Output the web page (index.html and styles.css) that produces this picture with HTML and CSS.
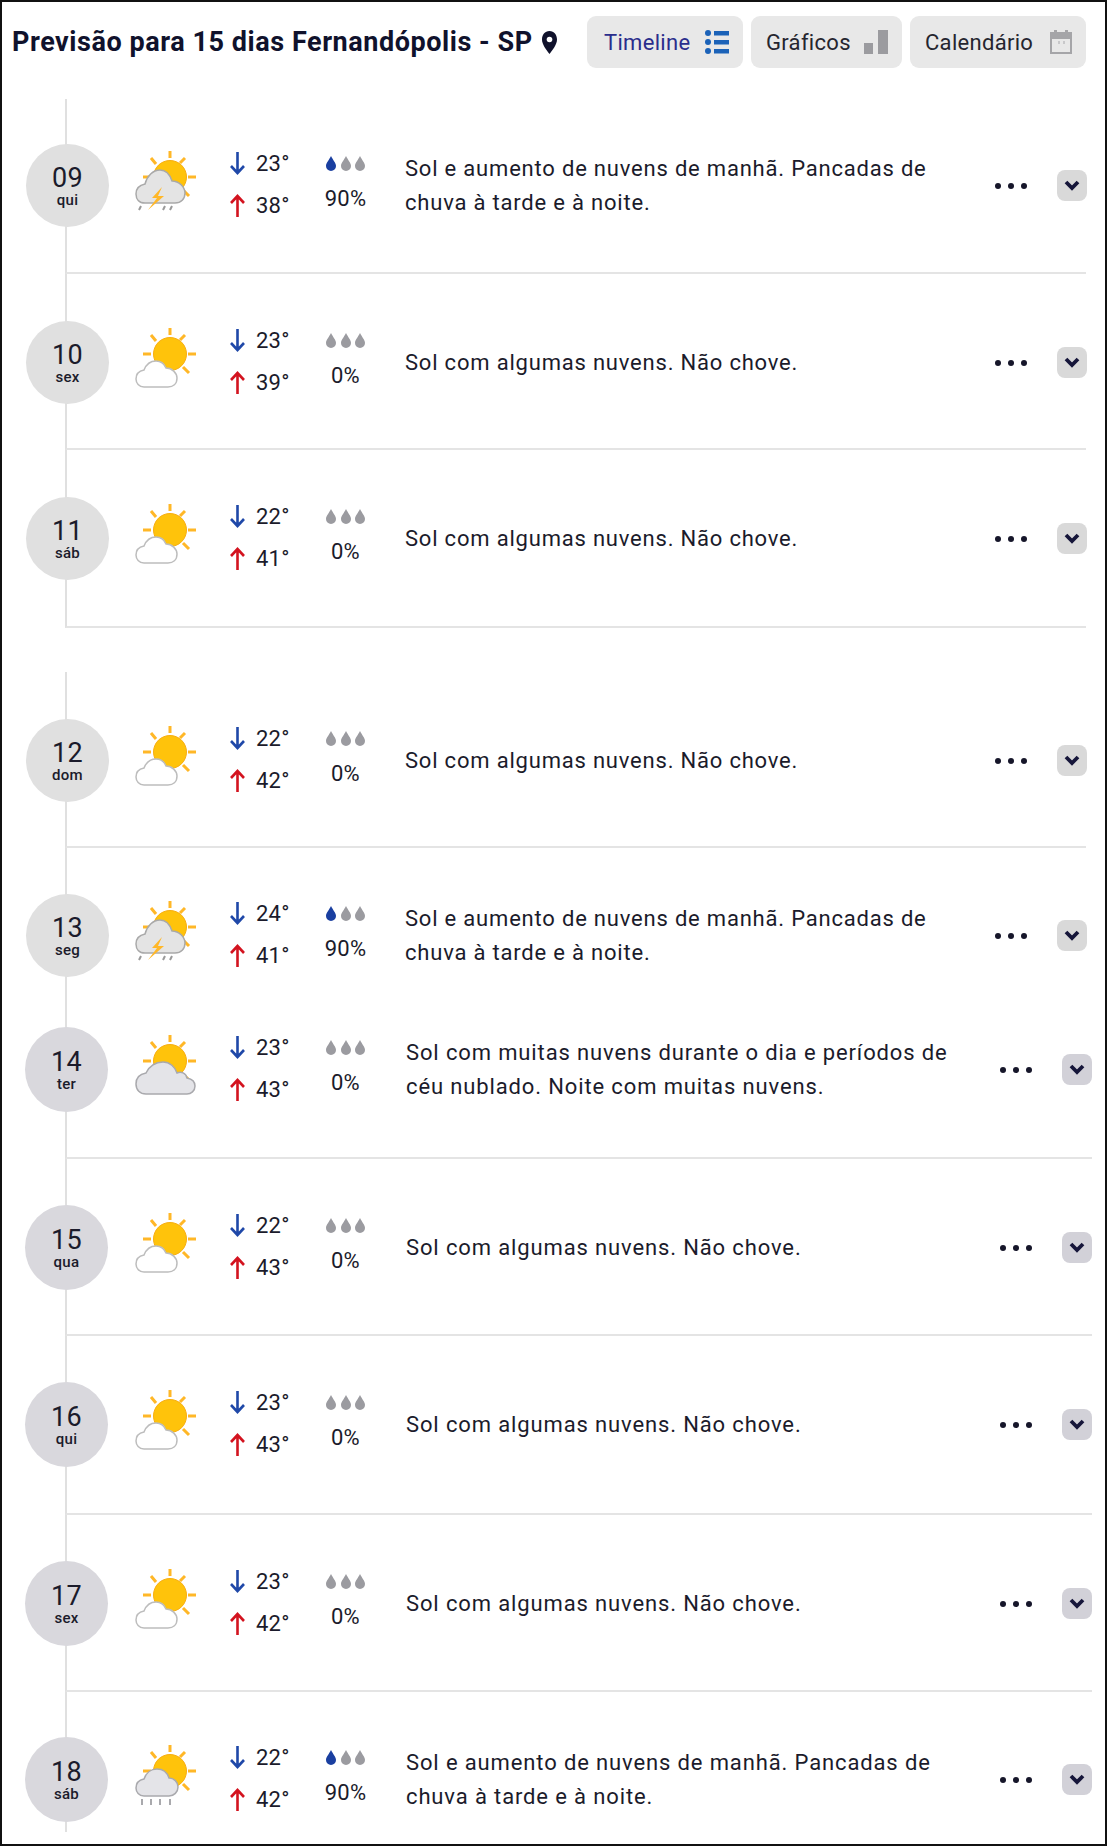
FILE: index.html
```html
<!DOCTYPE html>
<html lang="pt-BR">
<head>
  <meta charset="UTF-8">
  <meta name="viewport" content="width=device-width, initial-scale=1.0">
  <title>Previsão para 15 dias</title>
  <link rel="stylesheet" href="styles.css">
</head>
<body>

  <!-- Weather icons -->
  <svg class="defs" width="0" height="0">
    <symbol id="sun" viewBox="0 0 61 60">
      <circle cx="35" cy="26" r="16.500" fill="#ffc30b" stroke="#f7ae12" stroke-width="1"/>
      <g stroke="#ffb727" stroke-width="3">
        <path d="M35 0V7M50 7L45 12M61 26H53M54 45L48 39M8 26H16M16 7L21 13"/>
      </g>
    </symbol>
    <symbol id="sun-cloud" viewBox="0 0 61 60">
      <use href="#sun"/>
      <path d="M9 59C4 59 1 55 1 51C1 46 4 43 9 42C11 37 15 33 21 33C26 33 29 35 31 40C37 40 42 45 42 50C42 56 38 59 33 59Z" fill="#fff" stroke="#bdbdbd" stroke-width="1.5"/>
    </symbol>
    <symbol id="sun-cloudy" viewBox="0 0 61 60">
      <use href="#sun"/>
      <path d="M11 59C5 59 1 55 1 49C1 43 5 39 11 38C14 32 20 27 28 27C35 27 40 32 42 38C46 36 51 38 52 43C57 44 60 47 60 51C60 56 56 59 52 59Z" fill="#e4e4e8" stroke="#a9a9ad" stroke-width="1.5"/>
    </symbol>
    <symbol id="sun-storm" viewBox="0 0 61 60">
      <use href="#sun"/>
      <path d="M10 52C4 52 1 48 1 43C1 37 5 34 10 33C12 25 18 19 25 19C31 19 35 24 37 30C44 30 50 36 50 42C50 48 46 52 40 52Z" fill="#e4e4e4" stroke="#a9a9a9" stroke-width="1.5"/>
      <path d="M27 36L17 47H22L13 59L29 45H23Z" fill="#ffb727"/>
      <path d="M6 55L4 59M30 55L28 59M37 55L35 59" stroke="#9a9a9a" stroke-width="2"/>
    </symbol>
    <symbol id="sun-rain" viewBox="0 0 61 60">
      <use href="#sun"/>
      <path d="M9 51C4 51 1 47 1 43C1 38 4 35 9 34C11 28 16 24 22 24C28 24 32 27 34 33C39 33 43 37 43 42C43 47 39 51 34 51Z" fill="#e4e4e8" stroke="#a9a9ad" stroke-width="1.5"/>
      <path d="M7 54V60M16 54V60M25 54V60M35 54V60" stroke="#a9a9ad" stroke-width="2"/>
    </symbol>
    <symbol id="drop" viewBox="0 0 12 15">
      <path d="M6 0C8 4 11 7 11 10A5 5 0 0 1 1 10C1 7 4 4 6 0Z"/>
    </symbol>
    <symbol id="arrow-down" viewBox="0 0 15 23">
      <path d="M7.5 0V21M1 14L7.5 21L14 14" fill="none" stroke="#1f48a8" stroke-width="2.6"/>
    </symbol>
    <symbol id="arrow-up" viewBox="0 0 15 23">
      <path d="M7.5 23V2M1 9L7.5 2L14 9" fill="none" stroke="#d3131f" stroke-width="2.6"/>
    </symbol>
    <symbol id="chevron" viewBox="0 0 16 11">
      <path d="M2 2L8 8L14 2" fill="none" stroke="#16163a" stroke-width="3.8"/>
    </symbol>
  </svg>

  <div class="page">

    <div class="header">
      <h1 class="title">Previsão para 15 dias Fernandópolis - SP
        <svg class="pin" viewBox="0 0 17 23"><path d="M8.500 0C3.800 0 1 3.800 1 8.500C1 13.500 5.500 19 8.500 23C11.500 19 16 13.500 16 8.500C16 3.800 13.200 0 8.500 0Z" fill="#10122c"/><circle cx="8.500" cy="8.500" r="2.800" fill="#fff"/></svg>
      </h1>
      <div class="tabs">
        <div class="tab tab-active">Timeline
          <svg class="tab-icon" viewBox="0 0 24 24" fill="#1b62b8"><circle cx="3" cy="3" r="3"/><circle cx="3" cy="12" r="3"/><circle cx="3" cy="21" r="3"/><rect x="9" y="1" width="15" height="4.500"/><rect x="9" y="10" width="15" height="4.500"/><rect x="9" y="19" width="15" height="4.500"/></svg>
        </div>
        <div class="tab">Gráficos
          <svg class="tab-icon" viewBox="0 0 24 24" fill="#9b9b9f"><rect x="0" y="13" width="9" height="11"/><rect x="14" y="0" width="10" height="24"/></svg>
        </div>
        <div class="tab">Calendário
          <svg class="tab-icon tab-icon-cal" viewBox="0 0 22 24"><rect x="1" y="3" width="20" height="20" fill="#e8e8e8" stroke="#a5a5a8" stroke-width="2"/><rect x="1" y="3" width="20" height="6" fill="#a5a5a8"/><rect x="4" y="0" width="3" height="4" fill="#a5a5a8"/><rect x="15" y="0" width="3" height="4" fill="#a5a5a8"/><rect x="8" y="11" width="2" height="3" fill="#c8c8ca"/><rect x="13" y="11" width="2" height="3" fill="#c8c8ca"/></svg>
        </div>
      </div>
    </div>

    <div class="group">
      <div class="day day-09">
        <div class="date"><span class="num">09</span><span class="weekday">qui</span></div>
        <svg class="wx"><use href="#sun-storm"/></svg>
        <div class="temps">
          <div class="temp"><svg class="arrow"><use href="#arrow-down"/></svg>23°</div>
          <div class="temp"><svg class="arrow"><use href="#arrow-up"/></svg>38°</div>
        </div>
        <div class="rain">
          <div class="drops"><svg class="drop on"><use href="#drop"/></svg><svg class="drop"><use href="#drop"/></svg><svg class="drop"><use href="#drop"/></svg></div>
          <span>90%</span>
        </div>
        <p class="desc">Sol e aumento de nuvens de manhã. Pancadas de chuva à tarde e à noite.</p>
        <div class="dots"><i></i><i></i><i></i></div>
        <div class="more"><svg class="chev"><use href="#chevron"/></svg></div>
      </div>

      <div class="day day-10">
        <div class="date"><span class="num">10</span><span class="weekday">sex</span></div>
        <svg class="wx"><use href="#sun-cloud"/></svg>
        <div class="temps">
          <div class="temp"><svg class="arrow"><use href="#arrow-down"/></svg>23°</div>
          <div class="temp"><svg class="arrow"><use href="#arrow-up"/></svg>39°</div>
        </div>
        <div class="rain">
          <div class="drops"><svg class="drop"><use href="#drop"/></svg><svg class="drop"><use href="#drop"/></svg><svg class="drop"><use href="#drop"/></svg></div>
          <span>0%</span>
        </div>
        <p class="desc">Sol com algumas nuvens. Não chove.</p>
        <div class="dots"><i></i><i></i><i></i></div>
        <div class="more"><svg class="chev"><use href="#chevron"/></svg></div>
      </div>

      <div class="day day-11">
        <div class="date"><span class="num">11</span><span class="weekday">sáb</span></div>
        <svg class="wx"><use href="#sun-cloud"/></svg>
        <div class="temps">
          <div class="temp"><svg class="arrow"><use href="#arrow-down"/></svg>22°</div>
          <div class="temp"><svg class="arrow"><use href="#arrow-up"/></svg>41°</div>
        </div>
        <div class="rain">
          <div class="drops"><svg class="drop"><use href="#drop"/></svg><svg class="drop"><use href="#drop"/></svg><svg class="drop"><use href="#drop"/></svg></div>
          <span>0%</span>
        </div>
        <p class="desc">Sol com algumas nuvens. Não chove.</p>
        <div class="dots"><i></i><i></i><i></i></div>
        <div class="more"><svg class="chev"><use href="#chevron"/></svg></div>
      </div>
    </div>

    <div class="group group-gap">
      <div class="day day-12">
        <div class="date"><span class="num">12</span><span class="weekday">dom</span></div>
        <svg class="wx"><use href="#sun-cloud"/></svg>
        <div class="temps">
          <div class="temp"><svg class="arrow"><use href="#arrow-down"/></svg>22°</div>
          <div class="temp"><svg class="arrow"><use href="#arrow-up"/></svg>42°</div>
        </div>
        <div class="rain">
          <div class="drops"><svg class="drop"><use href="#drop"/></svg><svg class="drop"><use href="#drop"/></svg><svg class="drop"><use href="#drop"/></svg></div>
          <span>0%</span>
        </div>
        <p class="desc">Sol com algumas nuvens. Não chove.</p>
        <div class="dots"><i></i><i></i><i></i></div>
        <div class="more"><svg class="chev"><use href="#chevron"/></svg></div>
      </div>

      <div class="day day-13">
        <div class="date"><span class="num">13</span><span class="weekday">seg</span></div>
        <svg class="wx"><use href="#sun-storm"/></svg>
        <div class="temps">
          <div class="temp"><svg class="arrow"><use href="#arrow-down"/></svg>24°</div>
          <div class="temp"><svg class="arrow"><use href="#arrow-up"/></svg>41°</div>
        </div>
        <div class="rain">
          <div class="drops"><svg class="drop on"><use href="#drop"/></svg><svg class="drop"><use href="#drop"/></svg><svg class="drop"><use href="#drop"/></svg></div>
          <span>90%</span>
        </div>
        <p class="desc">Sol e aumento de nuvens de manhã. Pancadas de chuva à tarde e à noite.</p>
        <div class="dots"><i></i><i></i><i></i></div>
        <div class="more"><svg class="chev"><use href="#chevron"/></svg></div>
      </div>
    </div>

    <div class="group group-wide">
      <div class="day day-14">
        <div class="date"><span class="num">14</span><span class="weekday">ter</span></div>
        <svg class="wx"><use href="#sun-cloudy"/></svg>
        <div class="temps">
          <div class="temp"><svg class="arrow"><use href="#arrow-down"/></svg>23°</div>
          <div class="temp"><svg class="arrow"><use href="#arrow-up"/></svg>43°</div>
        </div>
        <div class="rain">
          <div class="drops"><svg class="drop"><use href="#drop"/></svg><svg class="drop"><use href="#drop"/></svg><svg class="drop"><use href="#drop"/></svg></div>
          <span>0%</span>
        </div>
        <p class="desc">Sol com muitas nuvens durante o dia e períodos de céu nublado. Noite com muitas nuvens.</p>
        <div class="dots"><i></i><i></i><i></i></div>
        <div class="more"><svg class="chev"><use href="#chevron"/></svg></div>
      </div>

      <div class="day day-15">
        <div class="date"><span class="num">15</span><span class="weekday">qua</span></div>
        <svg class="wx"><use href="#sun-cloud"/></svg>
        <div class="temps">
          <div class="temp"><svg class="arrow"><use href="#arrow-down"/></svg>22°</div>
          <div class="temp"><svg class="arrow"><use href="#arrow-up"/></svg>43°</div>
        </div>
        <div class="rain">
          <div class="drops"><svg class="drop"><use href="#drop"/></svg><svg class="drop"><use href="#drop"/></svg><svg class="drop"><use href="#drop"/></svg></div>
          <span>0%</span>
        </div>
        <p class="desc">Sol com algumas nuvens. Não chove.</p>
        <div class="dots"><i></i><i></i><i></i></div>
        <div class="more"><svg class="chev"><use href="#chevron"/></svg></div>
      </div>

      <div class="day day-16">
        <div class="date"><span class="num">16</span><span class="weekday">qui</span></div>
        <svg class="wx"><use href="#sun-cloud"/></svg>
        <div class="temps">
          <div class="temp"><svg class="arrow"><use href="#arrow-down"/></svg>23°</div>
          <div class="temp"><svg class="arrow"><use href="#arrow-up"/></svg>43°</div>
        </div>
        <div class="rain">
          <div class="drops"><svg class="drop"><use href="#drop"/></svg><svg class="drop"><use href="#drop"/></svg><svg class="drop"><use href="#drop"/></svg></div>
          <span>0%</span>
        </div>
        <p class="desc">Sol com algumas nuvens. Não chove.</p>
        <div class="dots"><i></i><i></i><i></i></div>
        <div class="more"><svg class="chev"><use href="#chevron"/></svg></div>
      </div>

      <div class="day day-17">
        <div class="date"><span class="num">17</span><span class="weekday">sex</span></div>
        <svg class="wx"><use href="#sun-cloud"/></svg>
        <div class="temps">
          <div class="temp"><svg class="arrow"><use href="#arrow-down"/></svg>23°</div>
          <div class="temp"><svg class="arrow"><use href="#arrow-up"/></svg>42°</div>
        </div>
        <div class="rain">
          <div class="drops"><svg class="drop"><use href="#drop"/></svg><svg class="drop"><use href="#drop"/></svg><svg class="drop"><use href="#drop"/></svg></div>
          <span>0%</span>
        </div>
        <p class="desc">Sol com algumas nuvens. Não chove.</p>
        <div class="dots"><i></i><i></i><i></i></div>
        <div class="more"><svg class="chev"><use href="#chevron"/></svg></div>
      </div>

      <div class="day day-18">
        <div class="date"><span class="num">18</span><span class="weekday">sáb</span></div>
        <svg class="wx"><use href="#sun-rain"/></svg>
        <div class="temps">
          <div class="temp"><svg class="arrow"><use href="#arrow-down"/></svg>22°</div>
          <div class="temp"><svg class="arrow"><use href="#arrow-up"/></svg>42°</div>
        </div>
        <div class="rain">
          <div class="drops"><svg class="drop on"><use href="#drop"/></svg><svg class="drop"><use href="#drop"/></svg><svg class="drop"><use href="#drop"/></svg></div>
          <span>90%</span>
        </div>
        <p class="desc">Sol e aumento de nuvens de manhã. Pancadas de chuva à tarde e à noite.</p>
        <div class="dots"><i></i><i></i><i></i></div>
        <div class="more"><svg class="chev"><use href="#chevron"/></svg></div>
      </div>
    </div>

  </div>

</body>
</html>
```

FILE: styles.css
```css
body {
  font-family: Roboto, 'Liberation Sans', sans-serif;
  background-color: #fff;
  color: #1b1b2b;
  margin: 0;
}

.defs {
  display: block;
  height: 0;
}

.page {
  box-sizing: border-box;
  width: 1107px;
  height: 1846px;
  border: 2px solid #111;
  overflow: hidden;
}

/* Header */
.header {
  display: flex;
  justify-content: space-between;
  align-items: center;
  height: 52px;
  padding: 14px 19px 31px 10px;
}

.title {
  display: flex;
  align-items: center;
  gap: 8px;
  margin: 0;
  font-size: 27px;
  font-weight: 700;
  letter-spacing: 0.55px;
  color: #10122c;
  white-space: nowrap;
}

.pin {
  width: 17px;
  height: 23px;
}

.tabs {
  display: flex;
  gap: 8px;
}

.tab {
  display: flex;
  align-items: center;
  justify-content: space-between;
  box-sizing: border-box;
  width: 151px;
  height: 52px;
  padding: 0 14px 0 15px;
  background-color: #e8e8e8;
  border-radius: 9px;
  font-size: 22px;
  letter-spacing: 0.3px;
  color: #25252f;
}

.tab:last-child {
  width: 176px;
}

.tab-active {
  width: 156px;
  padding-left: 17px;
  color: #2a2d8c;
}

.tab-icon {
  width: 24px;
  height: 24px;
}

.tab-icon-cal {
  width: 22px;
}

/* Day rows */
.group {
  margin-left: 63px;
  width: 1021px;
}

.group-gap {
  margin-top: 44px;
}

.group-wide {
  width: 1027px;
}

.day {
  display: flex;
  align-items: center;
  box-sizing: border-box;
  border-left: 2px solid #e0e0e0;
  border-bottom: 2px solid #e4e4e4;
}

.day-09 { padding: 45px 0; }
.day-10 { padding: 47px 0 44px; }
.day-11 { padding: 47px 0 46px; }
.day-12 { padding: 47px 0 44px; }
.day-13 { padding: 46px 0 28px; border-bottom: none; }
.day-14 { padding: 22px 0 45px; }
.day-15 { padding: 46px 0 44px; }
.day-16 { padding: 46px 0 46px; }
.day-17 { padding: 46px 0 44px; }
.day-18 { padding: 45px 0 10px; border-bottom: none; }

.date {
  display: flex;
  flex-direction: column;
  align-items: center;
  justify-content: center;
  flex-shrink: 0;
  width: 83px;
  height: 83px;
  margin-left: -41px;
  background-color: #e0e0e0;
  border-radius: 50%;
}

.num {
  font-size: 27px;
  line-height: 28px;
  letter-spacing: 0.3px;
}

.weekday {
  font-size: 15px;
  font-weight: 500;
  line-height: 16px;
  letter-spacing: 0.3px;
}

.wx {
  flex-shrink: 0;
  width: 61px;
  height: 60px;
  margin: 0 0 10px 26px;
}

.temps {
  flex-shrink: 0;
  width: 95px;
  margin: -8px 0 -6px 34px;
}

.temp {
  display: flex;
  align-items: center;
  gap: 11px;
  height: 42px;
  font-size: 22px;
  letter-spacing: 0.2px;
}

.arrow {
  width: 15px;
  height: 23px;
}

.rain {
  flex-shrink: 0;
  width: 41px;
  margin-bottom: 4px;
  text-align: center;
  font-size: 22px;
  letter-spacing: 0.3px;
  white-space: nowrap;
}

.rain span {
  display: block;
  margin: 16px -5px 0;
  line-height: 24px;
}

.drops {
  display: flex;
  justify-content: space-between;
}

.drop {
  width: 12px;
  height: 15px;
  fill: #9b9ba0;
}

.drop.on {
  fill: #1a3fa0;
}

.desc {
  flex-shrink: 0;
  width: 560px;
  margin: 0 0 0 39px;
  font-size: 22px;
  line-height: 34px;
  letter-spacing: 0.8px;
}

.dots {
  display: flex;
  gap: 7px;
  flex-shrink: 0;
  margin-left: 30px;
}

.dots i {
  width: 6px;
  height: 6px;
  background-color: #16162a;
  border-radius: 50%;
}

.more {
  display: flex;
  align-items: center;
  justify-content: center;
  flex-shrink: 0;
  width: 30px;
  height: 31px;
  margin-left: 30px;
  background-color: #d9d9d9;
  border-radius: 8px;
}

.chev {
  width: 16px;
  height: 11px;
}

/* Lower part of the list sits a few pixels to the right */
.group-wide .date {
  margin-left: -42px;
  height: 85px;
  background-color: #d9d8dd;
}

.group-wide .wx {
  margin-left: 27px;
}

.group-wide .desc {
  width: 564px;
  margin-left: 40px;
  letter-spacing: 0.87px;
}

.group-wide .more {
  background-color: #d2d1d8;
}
```
